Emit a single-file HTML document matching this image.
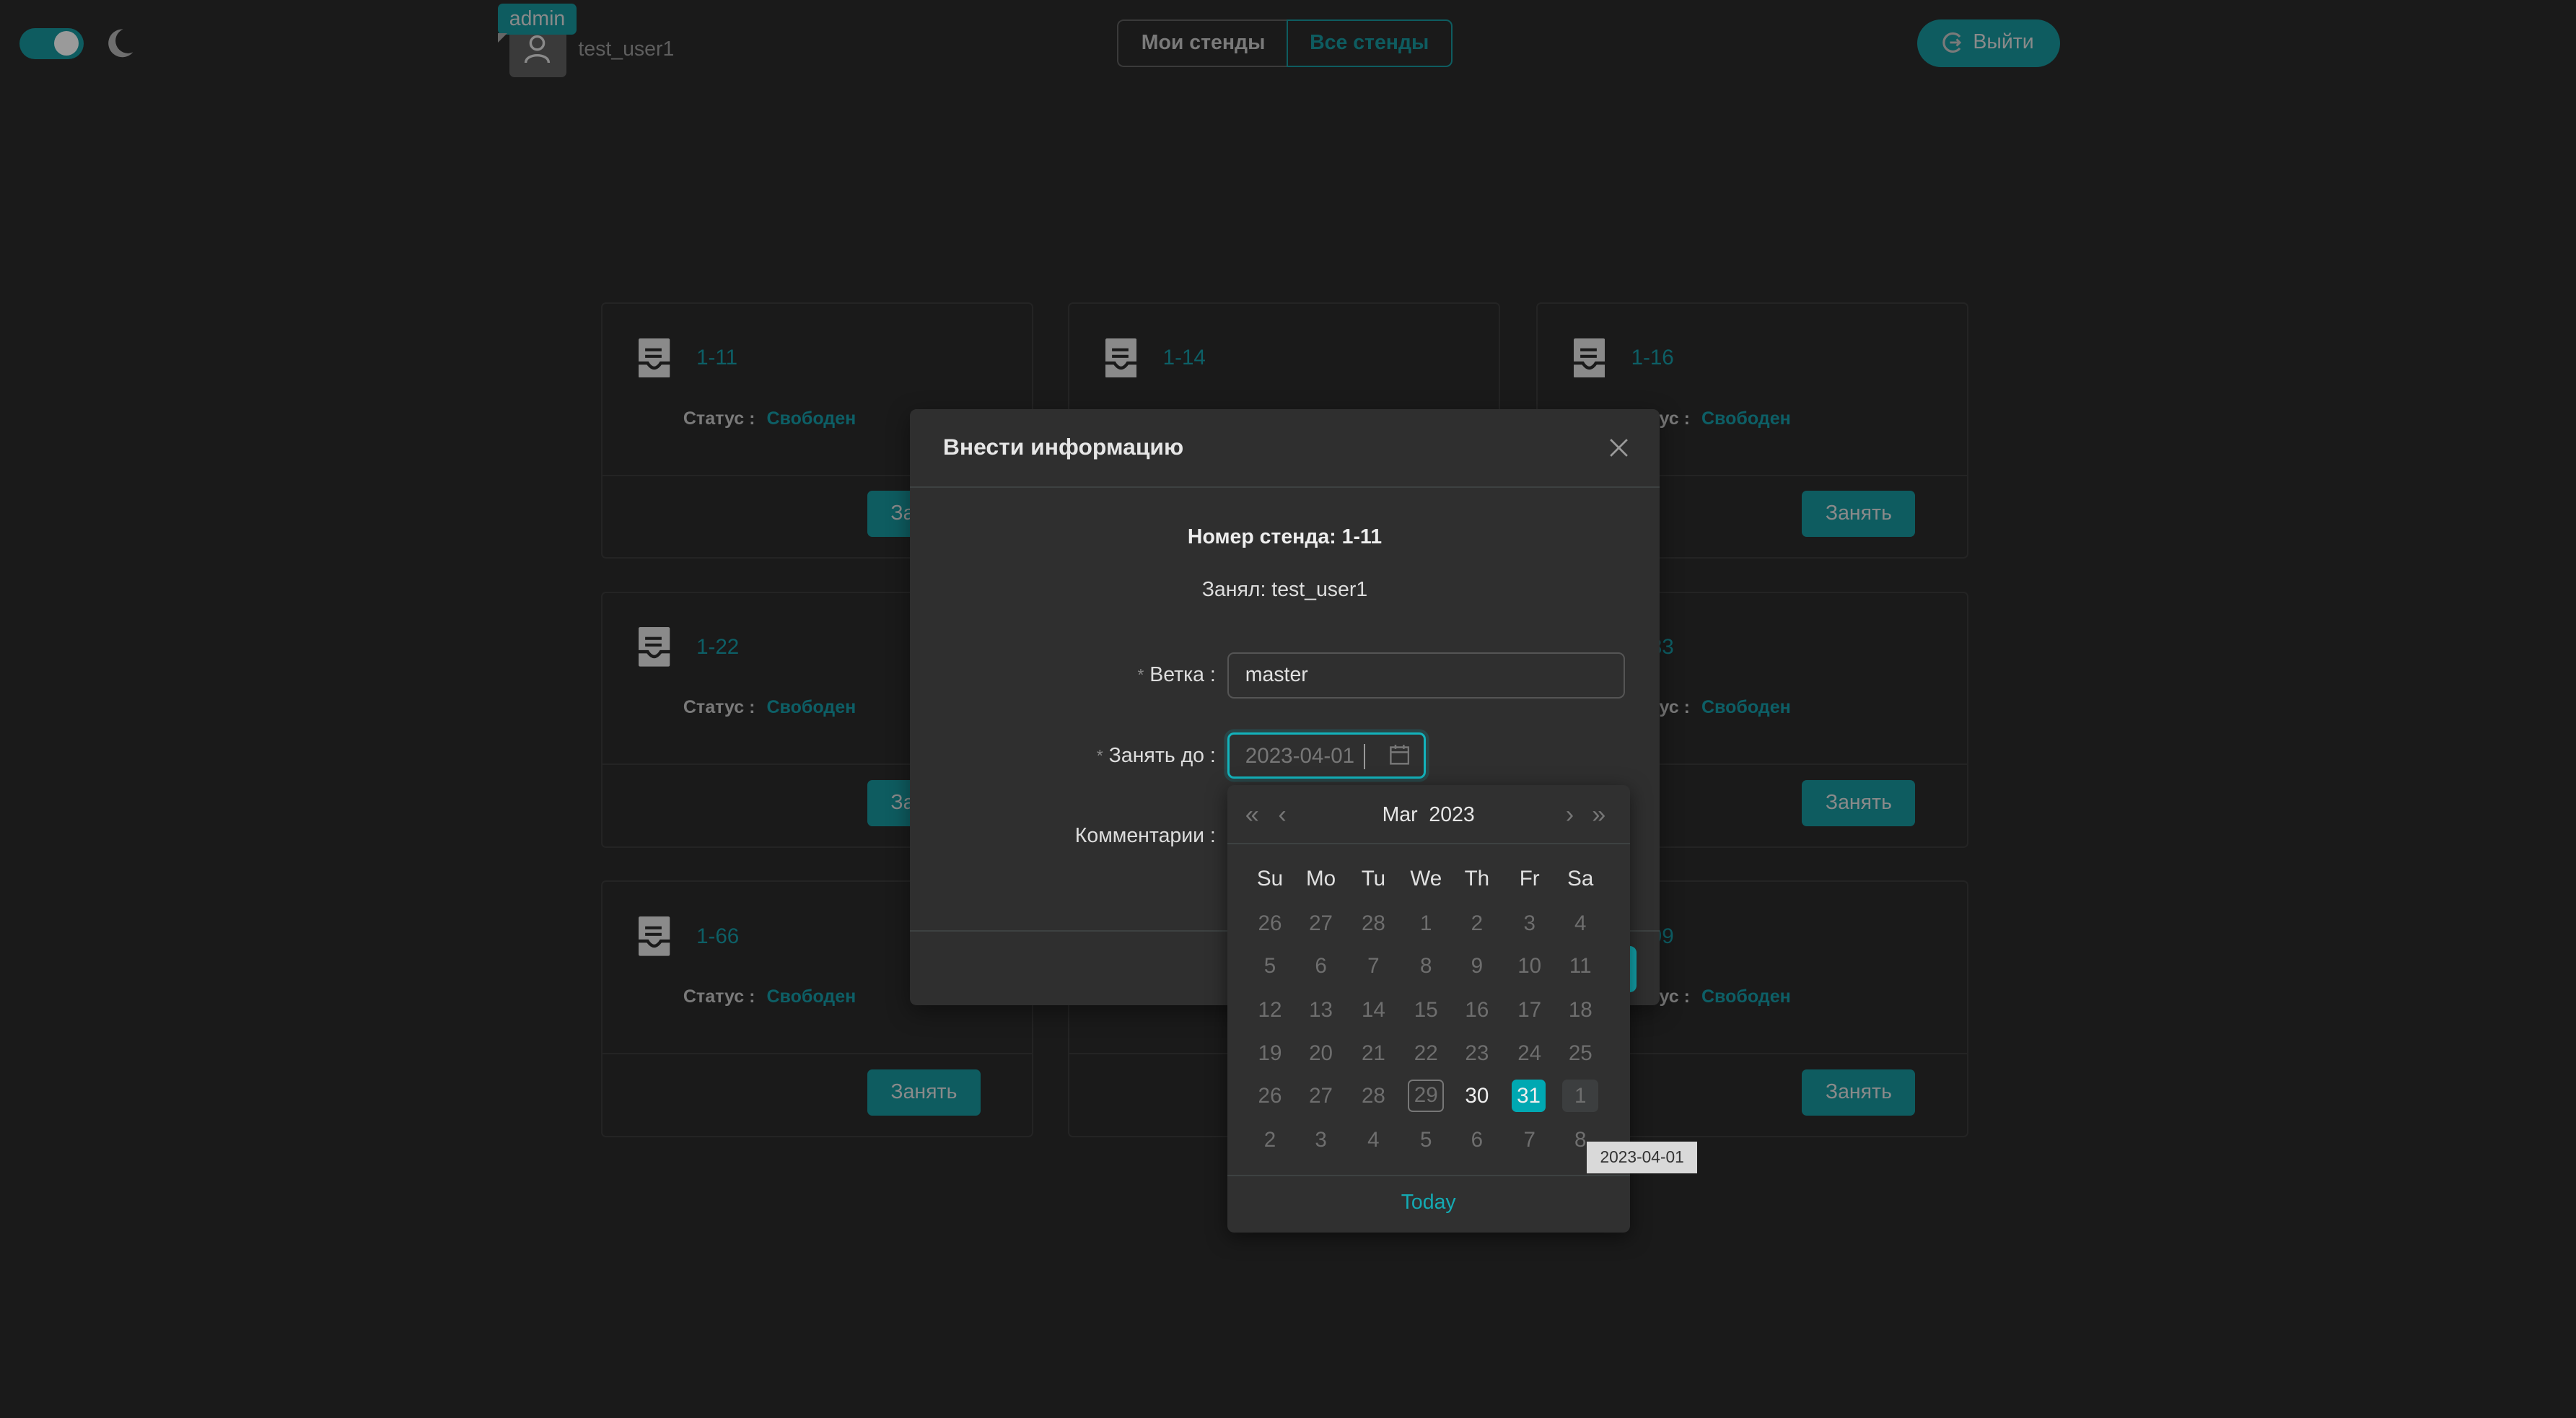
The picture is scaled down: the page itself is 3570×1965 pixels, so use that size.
<!DOCTYPE html>
<html><head><meta charset="utf-8">
<style>
*{margin:0;padding:0;box-sizing:border-box}
html,body{width:3570px;height:1964px;overflow:hidden;background:#1a1a1a}
#w{position:absolute;left:0;top:0;width:1568px;height:863px;zoom:2.2768;font-family:"Liberation Sans",sans-serif;color:#8a8a8a}
.a{position:absolute}
.t{position:absolute;height:20px;line-height:20px;white-space:nowrap}
.card{position:absolute;width:263px;height:156px;border:1px solid #242424;border-radius:3px}
.card .div{position:absolute;left:0;right:0;top:104px;border-top:1px solid #242424}
.card .ttl{left:57px;top:23px;font-size:13px;color:#0d5f66}
.card .st{left:49px;top:60px;font-size:11px;font-weight:bold;color:#7a7a7a}
.card .st b{color:#0d5f66;margin-left:7px}
.card .btn{position:absolute;left:161px;top:114px;width:69px;height:28px;background:#0e5c60;border-radius:3px;color:#8a8a8a;font-size:12.5px;text-align:center;line-height:28px}
.card svg{position:absolute;left:22px;top:21px}
.cal .c{position:absolute;width:22px;height:20px;line-height:20px;text-align:center;font-size:13px;color:#6e6e6e;margin-left:-11px;margin-top:-10px}
.cal .h{color:#e0e0e0}
</style></head><body><div id="w">

<div class="a" style="left:12px;top:17px;width:39px;height:19px;border-radius:10px;background:#0e5c60"></div>
<div class="a" style="left:33px;top:19px;width:15px;height:15px;border-radius:50%;background:#9a9a9a"></div>
<svg class="a" style="left:62px;top:16px" width="22" height="21" viewBox="0 0 22 21"><path d="M13 2 A8.5 8.5 0 1 0 19 16 A7 7 0 0 1 13 2 Z" fill="#6e6e6e"/></svg>

<div class="a" style="left:310px;top:13px;width:35px;height:34px;background:#3a3a3a;border-radius:3px"></div>
<svg class="a" style="left:318px;top:20px" width="18" height="19" viewBox="0 0 18 19"><circle cx="9" cy="6" r="4" fill="none" stroke="#8a8a8a" stroke-width="1.5"/><path d="M2 18 C2 12 16 12 16 18" fill="none" stroke="#8a8a8a" stroke-width="1.5"/></svg>
<div class="a" style="left:303px;top:2px;width:48px;height:19px;background:#0e5c60;border-radius:3px;color:#8a8a8a;font-size:12.5px;text-align:center;line-height:19px">admin</div>
<div class="a" style="left:303px;top:20px;width:0;height:0;border-left:6px solid #666;border-bottom:6px solid transparent"></div>
<div class="t" style="left:352px;top:20px;font-size:12.5px;color:#5e5e5e">test_user1</div>

<div class="a" style="left:680px;top:12px;width:104px;height:29px;border:1px solid #3a3a3a;border-right:none;border-radius:4px 0 0 4px;font-size:12.5px;font-weight:bold;text-align:center;line-height:27px;color:#7a7a7a">Мои стенды</div>
<div class="a" style="left:783px;top:12px;width:101px;height:29px;border:1px solid #0e5c60;border-radius:0 4px 4px 0;font-size:12.5px;font-weight:bold;text-align:center;line-height:27px;color:#0e5c60">Все стенды</div>

<div class="a" style="left:1167px;top:12px;width:87px;height:29px;border-radius:15px;background:#0e5c60"></div>
<svg class="a" style="left:1182px;top:19px" width="14" height="14" viewBox="0 0 14 14"><path d="M11 3.5 A5.5 5.5 0 1 0 11 10.5" fill="none" stroke="#7a7a7a" stroke-width="1.4"/><path d="M5 7 H11 M9 5 L11 7 L9 9" fill="none" stroke="#7a7a7a" stroke-width="1.3"/></svg>
<div class="t" style="left:1201px;top:16px;font-size:12.5px;color:#8a8a8a">Выйти</div>

<div class="card" style="left:366px;top:184px"><svg width="19" height="24" viewBox="0 0 19 24"><path d="M1 0 H18 Q19 0 19 1 V14 H13 Q9.5 20 6 14 H0 V1 Q0 0 1 0Z M0 16 H5 Q9.5 22 14 16 H19 V23 Q19 24 18 24 H1 Q0 24 0 23Z" fill="#8a8a8a"/><rect x="4" y="6" width="10" height="1.8" fill="#1a1a1a"/><rect x="4" y="10" width="10" height="1.8" fill="#1a1a1a"/></svg><div class="t ttl">1-11</div><div class="t st">Статус :<b>Свободен</b></div><div class="div"></div><div class="btn">Занять</div></div>
<div class="card" style="left:650px;top:184px"><svg width="19" height="24" viewBox="0 0 19 24"><path d="M1 0 H18 Q19 0 19 1 V14 H13 Q9.5 20 6 14 H0 V1 Q0 0 1 0Z M0 16 H5 Q9.5 22 14 16 H19 V23 Q19 24 18 24 H1 Q0 24 0 23Z" fill="#8a8a8a"/><rect x="4" y="6" width="10" height="1.8" fill="#1a1a1a"/><rect x="4" y="10" width="10" height="1.8" fill="#1a1a1a"/></svg><div class="t ttl">1-14</div><div class="t st">Статус :<b>Свободен</b></div><div class="div"></div><div class="btn">Занять</div></div>
<div class="card" style="left:935px;top:184px"><svg width="19" height="24" viewBox="0 0 19 24"><path d="M1 0 H18 Q19 0 19 1 V14 H13 Q9.5 20 6 14 H0 V1 Q0 0 1 0Z M0 16 H5 Q9.5 22 14 16 H19 V23 Q19 24 18 24 H1 Q0 24 0 23Z" fill="#8a8a8a"/><rect x="4" y="6" width="10" height="1.8" fill="#1a1a1a"/><rect x="4" y="10" width="10" height="1.8" fill="#1a1a1a"/></svg><div class="t ttl">1-16</div><div class="t st">Статус :<b>Свободен</b></div><div class="div"></div><div class="btn">Занять</div></div>

<div class="card" style="left:366px;top:360px"><svg width="19" height="24" viewBox="0 0 19 24"><path d="M1 0 H18 Q19 0 19 1 V14 H13 Q9.5 20 6 14 H0 V1 Q0 0 1 0Z M0 16 H5 Q9.5 22 14 16 H19 V23 Q19 24 18 24 H1 Q0 24 0 23Z" fill="#8a8a8a"/><rect x="4" y="6" width="10" height="1.8" fill="#1a1a1a"/><rect x="4" y="10" width="10" height="1.8" fill="#1a1a1a"/></svg><div class="t ttl">1-22</div><div class="t st">Статус :<b>Свободен</b></div><div class="div"></div><div class="btn">Занять</div></div>
<div class="card" style="left:650px;top:360px"><div class="div"></div></div>
<div class="card" style="left:935px;top:360px"><svg width="19" height="24" viewBox="0 0 19 24"><path d="M1 0 H18 Q19 0 19 1 V14 H13 Q9.5 20 6 14 H0 V1 Q0 0 1 0Z M0 16 H5 Q9.5 22 14 16 H19 V23 Q19 24 18 24 H1 Q0 24 0 23Z" fill="#8a8a8a"/><rect x="4" y="6" width="10" height="1.8" fill="#1a1a1a"/><rect x="4" y="10" width="10" height="1.8" fill="#1a1a1a"/></svg><div class="t ttl">1-33</div><div class="t st">Статус :<b>Свободен</b></div><div class="div"></div><div class="btn">Занять</div></div>

<div class="card" style="left:366px;top:536px"><svg width="19" height="24" viewBox="0 0 19 24"><path d="M1 0 H18 Q19 0 19 1 V14 H13 Q9.5 20 6 14 H0 V1 Q0 0 1 0Z M0 16 H5 Q9.5 22 14 16 H19 V23 Q19 24 18 24 H1 Q0 24 0 23Z" fill="#8a8a8a"/><rect x="4" y="6" width="10" height="1.8" fill="#1a1a1a"/><rect x="4" y="10" width="10" height="1.8" fill="#1a1a1a"/></svg><div class="t ttl">1-66</div><div class="t st">Статус :<b>Свободен</b></div><div class="div"></div><div class="btn">Занять</div></div>
<div class="card" style="left:650px;top:536px"><div class="div"></div></div>
<div class="card" style="left:935px;top:536px"><svg width="19" height="24" viewBox="0 0 19 24"><path d="M1 0 H18 Q19 0 19 1 V14 H13 Q9.5 20 6 14 H0 V1 Q0 0 1 0Z M0 16 H5 Q9.5 22 14 16 H19 V23 Q19 24 18 24 H1 Q0 24 0 23Z" fill="#8a8a8a"/><rect x="4" y="6" width="10" height="1.8" fill="#1a1a1a"/><rect x="4" y="10" width="10" height="1.8" fill="#1a1a1a"/></svg><div class="t ttl">1-99</div><div class="t st">Статус :<b>Свободен</b></div><div class="div"></div><div class="btn">Занять</div></div>

<div class="a" style="left:554px;top:249px;width:456px;height:363px;background:#2f2f2f;border-radius:4px;box-shadow:0 4px 14px rgba(0,0,0,.4)">
  <div class="t" style="left:20px;top:13px;font-size:14px;font-weight:bold;color:#e6e6e6">Внести информацию</div>
  <svg class="a" style="left:426px;top:18px" width="11" height="11" viewBox="0 0 11 11"><path d="M0.5 0.5 L10.5 10.5 M10.5 0.5 L0.5 10.5" stroke="#9a9a9a" stroke-width="1.2"/></svg>
  <div class="a" style="left:0;right:0;top:47px;border-top:1px solid #3d4242"></div>
  <div class="t" style="left:0;width:456px;text-align:center;top:68px;font-size:12.5px;font-weight:bold;color:#eee">Номер стенда: 1-11</div>
  <div class="t" style="left:0;width:456px;text-align:center;top:100px;font-size:12.5px;color:#ddd">Занял: test_user1</div>
  <div class="t" style="right:270px;top:152px;font-size:12.5px;color:#ddd"><span style="color:#888;font-size:10px;vertical-align:top">*</span> Ветка :</div>
  <div class="a" style="left:193px;top:148px;width:242px;height:28px;border:1px solid #555;border-radius:4px"></div>
  <div class="t" style="left:204px;top:152px;font-size:12.5px;color:#e0e0e0">master</div>
  <div class="t" style="right:270px;top:201px;font-size:12.5px;color:#ddd"><span style="color:#888;font-size:10px;vertical-align:top">*</span> Занять до :</div>
  <div class="a" style="left:193px;top:197px;width:121px;height:28px;border:1.5px solid #13b3bc;border-radius:4px;box-shadow:0 0 0 2px rgba(19,179,188,.18)"></div>
  <div class="t" style="left:204px;top:201px;font-size:13px;color:#777">2023-04-01</div>
  <div class="a" style="left:276px;top:204px;width:1px;height:15px;background:#999"></div>
  <svg class="a" style="left:292px;top:204px" width="12" height="13" viewBox="0 0 12 13"><rect x="0.6" y="2" width="10.8" height="10" fill="none" stroke="#777" stroke-width="1.1"/><path d="M0.6 5 H11.4 M3.5 0.5 V3 M8.5 0.5 V3" stroke="#777" stroke-width="1.1"/></svg>
  <div class="t" style="right:270px;top:250px;font-size:12.5px;color:#ddd">Комментарии :</div>
  <div class="a" style="left:0;right:0;top:317px;border-top:1px solid #3d4242"></div>
  <div class="a" style="left:400px;top:327px;width:42px;height:28px;background:#13a3ac;border-radius:4px"></div>
</div>

<div class="a cal" style="left:747px;top:478px;width:245px;height:272px;background:#303030;border-radius:4px;box-shadow:0 3px 12px rgba(0,0,0,.5)">
  <div class="t" style="left:11px;top:8px;font-size:15px;color:#777">«</div>
  <div class="t" style="left:31px;top:8px;font-size:15px;color:#777">‹</div>
  <div class="t" style="left:0;width:245px;text-align:center;top:8px;font-size:12.5px;color:#e6e6e6">Mar&nbsp; 2023</div>
  <div class="t" style="left:206px;top:8px;font-size:15px;color:#777">›</div>
  <div class="t" style="left:222px;top:8px;font-size:15px;color:#777">»</div>
  <div class="a" style="left:0;right:0;top:35px;border-top:1px solid #3d4242"></div>
  <div class="c h" style="left:26px;top:57px">Su</div><div class="c h" style="left:57px;top:57px">Mo</div><div class="c h" style="left:89px;top:57px">Tu</div><div class="c h" style="left:121px;top:57px">We</div><div class="c h" style="left:152px;top:57px">Th</div><div class="c h" style="left:184px;top:57px">Fr</div><div class="c h" style="left:215px;top:57px">Sa</div>
  <div class="c" style="left:26px;top:84px">26</div><div class="c" style="left:57px;top:84px">27</div><div class="c" style="left:89px;top:84px">28</div><div class="c" style="left:121px;top:84px">1</div><div class="c" style="left:152px;top:84px">2</div><div class="c" style="left:184px;top:84px">3</div><div class="c" style="left:215px;top:84px">4</div>
  <div class="c" style="left:26px;top:110px">5</div><div class="c" style="left:57px;top:110px">6</div><div class="c" style="left:89px;top:110px">7</div><div class="c" style="left:121px;top:110px">8</div><div class="c" style="left:152px;top:110px">9</div><div class="c" style="left:184px;top:110px">10</div><div class="c" style="left:215px;top:110px">11</div>
  <div class="c" style="left:26px;top:137px">12</div><div class="c" style="left:57px;top:137px">13</div><div class="c" style="left:89px;top:137px">14</div><div class="c" style="left:121px;top:137px">15</div><div class="c" style="left:152px;top:137px">16</div><div class="c" style="left:184px;top:137px">17</div><div class="c" style="left:215px;top:137px">18</div>
  <div class="c" style="left:26px;top:163px">19</div><div class="c" style="left:57px;top:163px">20</div><div class="c" style="left:89px;top:163px">21</div><div class="c" style="left:121px;top:163px">22</div><div class="c" style="left:152px;top:163px">23</div><div class="c" style="left:184px;top:163px">24</div><div class="c" style="left:215px;top:163px">25</div>
  <div class="c" style="left:26px;top:189px">26</div><div class="c" style="left:57px;top:189px">27</div><div class="c" style="left:89px;top:189px">28</div><div class="c" style="left:121px;top:189px;border:1px solid #777;border-radius:3px;line-height:18px">29</div><div class="c" style="left:152px;top:189px;color:#eee">30</div><div class="c" style="left:184px;top:189px;background:#00a8b2;color:#eee;border-radius:3px;width:21px">31</div><div class="c" style="left:215px;top:189px;background:#3c3e3f;border-radius:3px">1</div>
  <div class="c" style="left:26px;top:216px">2</div><div class="c" style="left:57px;top:216px">3</div><div class="c" style="left:89px;top:216px">4</div><div class="c" style="left:121px;top:216px">5</div><div class="c" style="left:152px;top:216px">6</div><div class="c" style="left:184px;top:216px">7</div><div class="c" style="left:215px;top:216px">8</div>
  <div class="a" style="left:0;right:0;top:237px;border-top:1px solid #3d4242"></div>
  <div class="t" style="left:0;width:245px;text-align:center;top:244px;font-size:12.5px;color:#14aab3">Today</div>
</div>
<div class="a" style="left:966px;top:695px;width:67px;height:19px;background:#d9d9d9;color:#333;font-size:10px;line-height:19px;text-align:center;font-family:'Liberation Sans',sans-serif">2023-04-01</div>

</div></body></html>
